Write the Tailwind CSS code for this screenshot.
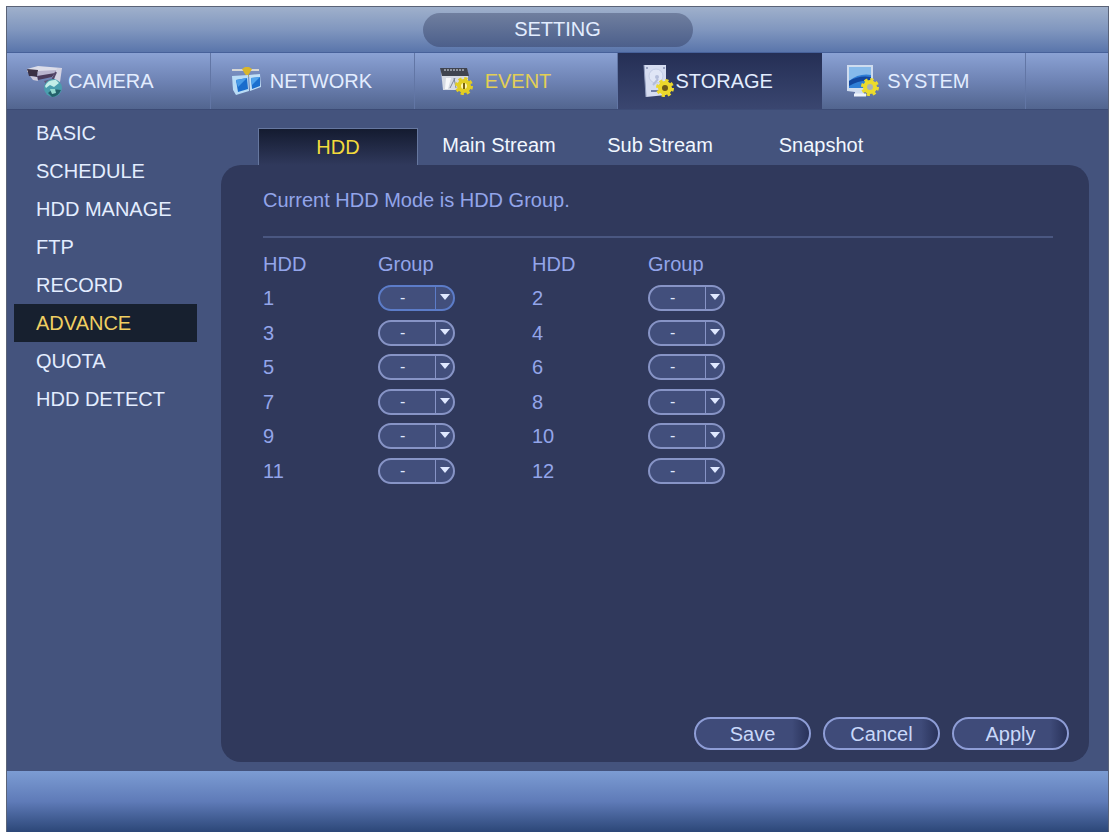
<!DOCTYPE html>
<html lang="en">
<head>
    <meta charset="UTF-8">
    <meta name="viewport" content="width=device-width, initial-scale=1.0">
    <title>Setting - Storage</title>
    <script src="https://cdn.jsdelivr.net/npm/@tailwindcss/browser@4"></script>
</head>
<body class="bg-white font-['Liberation_Sans',Arial,sans-serif] text-xl text-[#e3edff]">

    <div class="flex flex-col min-h-screen pt-[6px] pl-[6px] pb-[2px]">
        <div class="flex flex-col grow border-l border-r border-t border-[#5a6377] bg-[#44537d]">

            <!-- Title bar -->
            <header class="flex justify-center items-center h-[46px] bg-linear-to-b from-[#9fb0cb] via-[#8197bf] to-[#5a75ab] border-b border-[#47619a]">
                <h1 class="w-[270px] h-[34px] leading-[33px] text-center rounded-full bg-linear-to-b from-[#707f9f] to-[#4c5f8b]">SETTING</h1>
            </header>

            <!-- Main navigation -->
            <nav class="grid grid-cols-[204fr_204fr_204fr_204fr_204fr_82fr] h-[57px] bg-linear-to-b from-[#8ba2d4] via-[#6e83b4] to-[#52658f] border-b border-[#3c4b75]">
                <a href="#" class="flex items-center gap-1 pl-[19px] border-r border-[#6276a5]">
                    <svg class="w-[38px] h-[34px]" viewBox="0 0 38 34">
                        <path d="M1 5 12 2 36 4 33 8 13 9 1 8z" fill="#dcdde9"/>
                        <path d="M1 5 12 6 11 13 3 12z" fill="#3b3144"/>
                        <path d="M12 7 31 6 27 13 11 14z" fill="#b9b5ce"/>
                        <path d="M11 12 29 9 26 13 12 16z" fill="#4b3c5c"/>
                        <path d="M4 12 11 13 12 17 7 16z" fill="#cfcbdc"/>
                        <path d="M31 4h5l-2 14-4 0-2-4z" fill="#d4d3e2"/>
                        <path d="M30 8l-5 11" stroke="#55476a" stroke-width="2"/>
                        <path d="M18 17l8-2 3 4-8 3z" fill="#66597c"/>
                        <circle cx="27" cy="24" r="9" fill="#4a9eae"/>
                        <path d="M19 22q3-7 11-6l3 3-5 4-4-2-4 3z" fill="#c3eee8"/>
                        <path d="M22 29q5-5 13-3-3 7-9 7z" fill="#23606a"/>
                        <path d="M24 25l5 0 1 4-4 1z" fill="#95d9cf"/>
                    </svg>
                    CAMERA
                </a>
                <a href="#" class="flex items-center gap-2 pl-5 border-r border-[#6276a5]">
                    <svg class="w-[31px] h-[30px]" viewBox="0 0 31 30">
                        <path d="M1 4h27" stroke="#d6d7d5" stroke-width="2"/>
                        <path d="M11 3 14 1h4l3 2-3 5h-4z" fill="#d9b62b"/>
                        <path d="M16 5v6" stroke="#d9b62b" stroke-width="3"/>
                        <path d="M1 10 17 9l1 16-13 4-3-5z" fill="#b9dcf6"/>
                        <path d="M5 14 16 12l1 11-10 3z" fill="#196ccc"/>
                        <path d="M5 14l11-2-9 9z" fill="#489be8"/>
                        <path d="M18 9l11-1 1 13-11 4z" fill="#c2e0f7"/>
                        <path d="M20 12l9-1 0 9-8 3z" fill="#1b6fce"/>
                        <path d="M20 12l9-1-8 8z" fill="#4fa4ee"/>
                    </svg>
                    NETWORK
                </a>
                <a href="#" class="flex items-center gap-3 pl-[25px] border-r border-[#6276a5] text-[#e3cf55]">
                    <svg class="w-[33px] h-[30px]" viewBox="0 0 33 30">
                        <path d="M1 5h27v19H3z" fill="#d7dbe4"/>
                        <path d="M0 2h27l2 8H2z" fill="#40444f"/>
                        <path d="M4 4h21" stroke="#8f949f" stroke-width="2" stroke-dasharray="2 1"/>
                        <path d="M6 12l5 0-3 11H5z" fill="#f7f8fb"/>
                        <path d="M14 12l2 10M10 22l5-10" stroke="#7d8698" stroke-width="1"/>
                        <circle cx="24" cy="20" r="7" fill="none" stroke="#e2cd22" stroke-width="4" stroke-dasharray="3 2.5"/>
                        <circle cx="24" cy="20" r="5" fill="#fff6b0" stroke="#e2cd22" stroke-width="4"/>
                        <path d="M24 17v6" stroke="#7a6410" stroke-width="2"/>
                    </svg>
                    EVENT
                </a>
                <a href="#" aria-current="page" class="flex items-center gap-px pl-[25px] bg-linear-to-b from-[#252f55] to-[#3a4670]">
                    <svg class="w-[31px] h-[34px]" viewBox="0 0 31 34">
                        <path d="M1 1h22v30L3 33z" fill="#d5dcf0"/>
                        <path d="M1 1l2 32" stroke="#8f9bbd" stroke-width="1"/>
                        <circle cx="13" cy="12" r="7" fill="#e0e6f6" stroke="#c3cce5" stroke-width="1"/>
                        <circle cx="14" cy="13" r="2" fill="#b4bedb"/>
                        <path d="M15 15l-5 6" stroke="#b4bedb" stroke-width="2"/>
                        <path d="M8 27h8" stroke="#6f7ca3" stroke-width="2"/>
                        <circle cx="4" cy="4" r="1" fill="#8591b3"/>
                        <circle cx="21" cy="4" r="1" fill="#8591b3"/>
                        <circle cx="22" cy="24" r="7" fill="none" stroke="#ecd82c" stroke-width="4" stroke-dasharray="3 2.5"/>
                        <circle cx="22" cy="24" r="5" fill="#6d5a18" stroke="#ecd82c" stroke-width="4"/>
                    </svg>
                    STORAGE
                </a>
                <a href="#" class="flex items-center gap-2 pl-6 border-r border-[#6276a5]">
                    <svg class="w-[33px] h-[34px]" viewBox="0 0 33 34">
                        <path d="M1 1h26v26l-9 1v3h-9v-3l-8-1z" fill="#cfdcef"/>
                        <path d="M3 3h22v21H3z" fill="#2f7ed6"/>
                        <path d="M3 3h22v8Q13 9 3 17z" fill="#86baeb"/>
                        <path d="M3 17q10-6 22-4v4q-12-1-22 5z" fill="#12479f"/>
                        <path d="M8 31h12" stroke="#eef3fb" stroke-width="3"/>
                        <circle cx="24" cy="23" r="7" fill="none" stroke="#ecdc2c" stroke-width="4" stroke-dasharray="3 2.5"/>
                        <circle cx="24" cy="23" r="5" fill="#a9b3b8" stroke="#ecdc2c" stroke-width="4"/>
                    </svg>
                    SYSTEM
                </a>
            </nav>

            <main class="flex grow">
                <!-- Side menu -->
                <aside class="w-[214px] shrink-0 pt-1 pl-[7px] pr-6">
                    <ul class="leading-[38px]">
                        <li><a href="#" class="block pl-[22px]">BASIC</a></li>
                        <li><a href="#" class="block pl-[22px]">SCHEDULE</a></li>
                        <li><a href="#" class="block pl-[22px]">HDD MANAGE</a></li>
                        <li><a href="#" class="block pl-[22px]">FTP</a></li>
                        <li><a href="#" class="block pl-[22px]">RECORD</a></li>
                        <li><a href="#" class="block pl-[22px] bg-[#17202f] text-[#f0cf62]">ADVANCE</a></li>
                        <li><a href="#" class="block pl-[22px]">QUOTA</a></li>
                        <li><a href="#" class="block pl-[22px]">HDD DETECT</a></li>
                    </ul>
                </aside>

                <section class="flex flex-col grow pt-[18px] pr-[19px] pb-[9px]">
                    <!-- Tabs -->
                    <div class="flex gap-px h-[37px] pl-[37px]" role="tablist">
                        <button role="tab" aria-selected="true" class="w-[160px] border border-b-0 border-[#66779f] bg-linear-to-b from-[#141b30] to-[#30395c] text-[#f2da3c]">HDD</button>
                        <button role="tab" class="w-[160px] pb-1 text-[#f1f7ff]">Main Stream</button>
                        <button role="tab" class="w-[160px] pb-1 text-[#f1f7ff]">Sub Stream</button>
                        <button role="tab" class="w-[160px] pb-1 text-[#f1f7ff]">Snapshot</button>
                    </div>

                    <!-- Panel -->
                    <div class="flex flex-col grow rounded-[20px] bg-[#30395c] pl-[42px] pr-5 pb-3 text-[#93a5ea]">
                        <p class="h-[73px] pt-[21px] mr-4 border-b-2 border-[#4a5781]">Current HDD Mode is HDD Group.</p>

                        <table class="mt-2 h-[242px] w-[480px] table-fixed text-left">
                            <thead>
                                <tr class="h-[35px]">
                                    <th class="w-[115px] font-normal">HDD</th>
                                    <th class="w-[154px] font-normal">Group</th>
                                    <th class="w-[116px] font-normal">HDD</th>
                                    <th class="font-normal">Group</th>
                                </tr>
                            </thead>
                            <tbody id="groups"></tbody>
                        </table>

                        <div class="flex justify-end gap-3 mt-auto text-[#c9d8fa]">
                            <button class="w-[117px] h-[33px] rounded-full border-2 border-[#8e9dd6] bg-linear-to-r from-[#3f4b79] from-85% to-[#29325a]">Save</button>
                            <button class="w-[117px] h-[33px] rounded-full border-2 border-[#8e9dd6] bg-linear-to-r from-[#3f4b79] from-85% to-[#29325a]">Cancel</button>
                            <button class="w-[117px] h-[33px] rounded-full border-2 border-[#8e9dd6] bg-linear-to-r from-[#3f4b79] from-85% to-[#29325a]">Apply</button>
                        </div>
                    </div>
                </section>
            </main>

            <!-- Bottom bar -->
            <footer class="h-[61px] bg-linear-to-b from-[#7c9cd3] via-[#5f7bb8] via-50% to-[#2c4778]"></footer>
        </div>
    </div>

    <script>
        // One cell pair: disk number and its group selector
        function diskCells(n) {
            let border = n === 1 ? 'border-[#5c7cc8]' : 'border-[#8794c6]';
            return `
                <td><label for="group-${n}">${n}</label></td>
                <td>
                    <div class="relative w-[77px] h-[26px]">
                        <select id="group-${n}" class="appearance-none block w-full h-full pl-5 rounded-full border-2 ${border} bg-[#424f7c] text-base leading-none text-[#dfe8ff]">
                            <option>-</option>
                            <option>1</option>
                            <option>2</option>
                            <option>3</option>
                            <option>4</option>
                        </select>
                        <span class="absolute right-0 top-0 h-full w-5 border-l ${border} pointer-events-none">
                            <svg class="w-[10px] h-[6px] mt-[9px] ml-1" viewBox="0 0 10 6"><path d="M0 0h10L5 6z" fill="#dfe8ff"/></svg>
                        </span>
                    </div>
                </td>`;
        }

        let rows = '';
        for (let n = 1; n <= 12; n += 2) {
            rows += `<tr class="h-[34px]">${diskCells(n)}${diskCells(n + 1)}</tr>`;
        }
        document.getElementById('groups').innerHTML = rows;
    </script>

</body>
</html>
